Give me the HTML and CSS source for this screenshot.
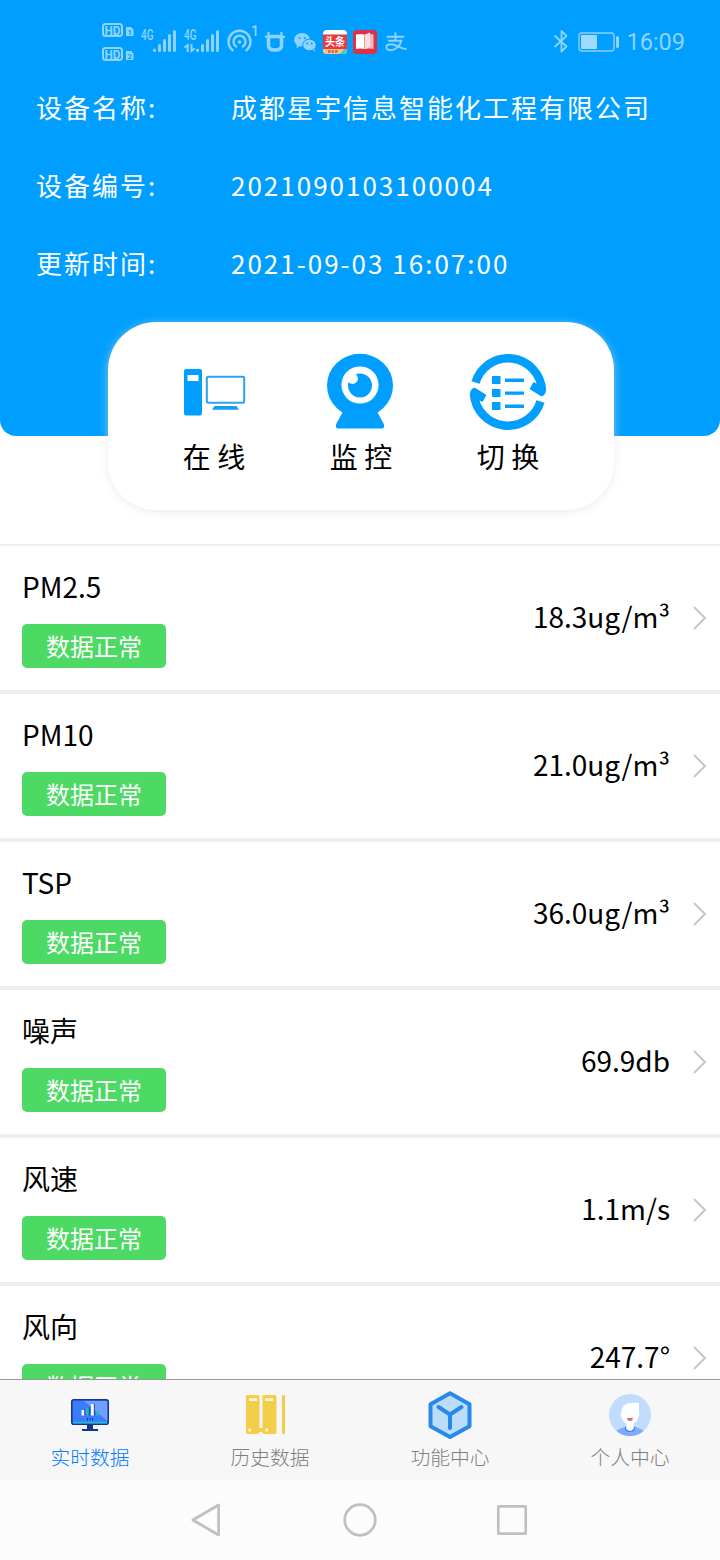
FILE: index.html
```html
<!DOCTYPE html>
<html lang="zh-CN">
<head>
<meta charset="utf-8">
<title>实时数据</title>
<link rel="stylesheet" href="styles.css">
</head>
<body>
<div class="app">
  <header class="header">
    <div class="status">
      <svg class="status-left" width="310" height="50" viewBox="100 16 310 50">
        <g fill="none" stroke="#8fd3ff" stroke-width="2">
          <rect x="103" y="24" width="19" height="12" rx="2.5"/>
          <rect x="103" y="48" width="19" height="12" rx="2.5"/>
        </g>
        <g class="roboto" fill="#8fd3ff">
          <text x="104.500" y="35" font-size="13.500" font-weight="700" textLength="16" lengthAdjust="spacingAndGlyphs">HD</text>
          <text x="104.500" y="59" font-size="13.500" font-weight="700" textLength="16" lengthAdjust="spacingAndGlyphs">HD</text>
          <path d="M126 27h5l2.500 2.500V36H126zM126 51h5l2.500 2.500V60H126z"/>
          <text x="141" y="40" font-size="14" font-weight="500" textLength="12.500" lengthAdjust="spacingAndGlyphs">4G</text>
          <text x="184" y="40" font-size="14" font-weight="500" textLength="12.500" lengthAdjust="spacingAndGlyphs">4G</text>
          <text x="251" y="36" font-size="14" font-weight="500">1</text>
        </g>
        <g class="roboto" fill="#079fff" font-size="8" font-weight="700">
          <text x="127.500" y="34.500">1</text><text x="127.500" y="58.800">2</text>
        </g>
        <g stroke="#8fd3ff" stroke-width="3" stroke-linecap="round" fill="none">
          <path d="M154.500 50v.5M159.500 45.500v5M164.500 40.500v10M169.500 35.500v15M174.500 31.500v19"/>
          <path d="M197.500 50v.5M202.500 45.500v5M207.500 40.500v10M212.500 35.500v15M217.500 31.500v19"/>
        </g>
        <path d="M184.500 47.500l3.200-2.500v7M191.500 44v7l3.200-2.500" fill="none" stroke="#8fd3ff" stroke-width="2"/>
        <g fill="none" stroke="#8fd3ff" stroke-width="2.400" stroke-linecap="round">
          <path d="M232.500 50.200a11 11 0 1 1 14 0M236 46.500a6 6 0 1 1 7 0"/>
          <circle cx="239.500" cy="42" r="1.800" fill="#8fd3ff" stroke="none"/>
        </g>
        <path d="M271 36.500h8q2.500 0 2.500 2.500v6.500q0 4.500-6.500 4.500t-6.500-4.500V39q0-2.500 2.500-2.500z" fill="none" stroke="#8fd3ff" stroke-width="3.600"/>
        <path d="M265 36.800l5-.8M285 36.800l-5-.8M268.500 32v4M281.500 32v4" stroke="#8fd3ff" stroke-width="2.200"/>
        <g fill="#8fd3ff">
          <path d="M297 44l-.5 4 3.200-1.700z"/>
          <ellipse cx="302" cy="39.700" rx="8" ry="6.800"/>
          <path d="M312 50l3 1.500-.5-4z"/>
          <ellipse cx="309.500" cy="45" rx="6.800" ry="5.800" stroke="#079fff" stroke-width="1"/>
        </g>
        <g fill="#079fff"><circle cx="299.500" cy="38" r="1.100"/><circle cx="304.800" cy="38" r="1.100"/><circle cx="307.300" cy="43.500" r="1"/><circle cx="311.800" cy="43.500" r="1"/></g>
        <rect x="323" y="30" width="24" height="24" rx="4" fill="#fff"/>
        <path d="M323 34.500h24V49h-24z" fill="#e93b3e"/>
        <path d="M323 49h24v1q0 4-4 4h-16q-4 0-4-4z" fill="#f6c58e"/>
        <path d="M340 54l4-5h3v1q0 4-4 4z" fill="#4ec9c8"/>
        <path d="M328 51.500h10" stroke="#de5c35" stroke-width="2.500" stroke-dasharray="2.500 1"/>
        <text class="cjk" x="325" y="46" font-size="11" font-weight="700" fill="#fff" textLength="20" lengthAdjust="spacingAndGlyphs">头条</text>
        <rect x="353" y="30" width="24" height="24" rx="4" fill="#df3046"/>
        <path d="M356 34.500q5-1 8.500 0v14.500q-4-1-8.500 0z" fill="#fff"/>
        <path d="M365 34.500q5-1 8.500 0v14.500q-4-1-8.500 0z" fill="#f6b9c0"/>
        <path d="M365 34.500l5-2v14l-5 2.500z" fill="#fbdde0"/>
        <g fill="none" stroke="#8fd3ff" stroke-width="1.900" stroke-linecap="round">
          <path d="M387.500 36.800h16M395.500 33v7.500M389 40.800h12.500c-1.500 5-6 9.500-10.500 9.500-6.500 0-6-6 0-6 5 0 9 4 15 4.800"/>
        </g>
      </svg>
      <div class="status-right">
        <svg width="68" height="26" viewBox="552 29 68 26">
          <path d="M554.500 35.500l12 11-5 5V31l5 5-12 11" fill="none" stroke="#8fd3ff" stroke-width="1.800" stroke-linejoin="round"/>
          <rect x="579" y="33" width="35" height="18" rx="3" fill="none" stroke="#6cc5ff" stroke-width="1.800"/>
          <rect x="581" y="35" width="16" height="14" rx="1" fill="#9fdbff"/>
          <rect x="616" y="36" width="3" height="12" rx="1.500" fill="#8fd3ff"/>
        </svg>
        <span class="clock">16:09</span>
      </div>
    </div>
    <dl class="info">
      <dt>设备名称:</dt><dd>成都星宇信息智能化工程有限公司</dd>
      <dt>设备编号:</dt><dd>2021090103100004</dd>
      <dt>更新时间:</dt><dd>2021-09-03 16:07:00</dd>
    </dl>
  </header>

  <section class="card">
    <div class="action">
      <svg width="80" height="80" viewBox="174 352 80 80">
        <path fill="#009fff" fill-rule="evenodd" d="M186 369h14q2 0 2 2v42q0 2.500-2 2.500h-14q-2 0-2-2.500v-42q0-2 2-2zM187.500 375v6h11v-6z"/>
        <rect x="206.800" y="376.800" width="37.400" height="26" rx="1.500" fill="#fff" stroke="#2ba2f2" stroke-width="2"/>
        <path d="M214.500 406h22l2.500 3.800h-27z" fill="#159df5"/>
      </svg>
      <span>在 线</span>
    </div>
    <div class="action">
      <svg width="80" height="80" viewBox="321 352 80 80">
        <ellipse cx="360" cy="385.500" rx="33" ry="31.700" fill="#009fff"/>
        <path fill="#009fff" d="M343 411.500h34l6.800 12.500q1.200 4.500-2 4.500h-43.600q-3.200 0-2-4.500z"/>
        <circle cx="360" cy="385" r="18.600" fill="#fff"/>
        <circle cx="360" cy="385.500" r="12" fill="#009fff"/>
        <circle cx="352.500" cy="378.500" r="5.400" fill="#fff"/>
      </svg>
      <span>监 控</span>
    </div>
    <div class="action">
      <svg width="80" height="80" viewBox="468 352 80 80">
        <g fill="none" stroke="#009fff" stroke-width="8.500">
          <path d="M475.500 382.500a34 34 0 0 1 66.500 8"/>
          <path d="M540.500 401.500a34 34 0 0 1-66.500-8"/>
        </g>
        <path fill="#009fff" d="M546 388q.5 7-4.500 8.500L529.500 389l4-7 6 3zM470 396q-.5-7 4.500-8.500l12 7.500-4 7-6-3z"/>
        <path fill="#009fff" d="M492 376h8.500v8H492zM492 389h8.500v8H492zM492 402h8.500v8H492zM505 378.500h19v3.500h-19zM505 391.500h19v3.300h-19zM505 404.500h19v3.500h-19z"/>
      </svg>
      <span>切 换</span>
    </div>
  </section>

  <main class="list">
    <div class="row"><div><div class="name">PM2.5</div><span class="badge">数据正常</span></div><span class="value">18.3ug/m³</span><svg class="arrow" viewBox="0 0 14 26"><path d="M1 2l11 11L1 24"/></svg></div>
    <div class="row"><div><div class="name">PM10</div><span class="badge">数据正常</span></div><span class="value">21.0ug/m³</span><svg class="arrow" viewBox="0 0 14 26"><path d="M1 2l11 11L1 24"/></svg></div>
    <div class="row"><div><div class="name">TSP</div><span class="badge">数据正常</span></div><span class="value">36.0ug/m³</span><svg class="arrow" viewBox="0 0 14 26"><path d="M1 2l11 11L1 24"/></svg></div>
    <div class="row"><div><div class="name">噪声</div><span class="badge">数据正常</span></div><span class="value">69.9db</span><svg class="arrow" viewBox="0 0 14 26"><path d="M1 2l11 11L1 24"/></svg></div>
    <div class="row"><div><div class="name">风速</div><span class="badge">数据正常</span></div><span class="value">1.1m/s</span><svg class="arrow" viewBox="0 0 14 26"><path d="M1 2l11 11L1 24"/></svg></div>
    <div class="row"><div><div class="name">风向</div><span class="badge">数据正常</span></div><span class="value">247.7°</span><svg class="arrow" viewBox="0 0 14 26"><path d="M1 2l11 11L1 24"/></svg></div>
  </main>

  <nav class="tabs">
    <a class="tab active">
      <svg width="48" height="50" viewBox="66 1390 48 50">
        <path d="M87 1424h6v6h-6z" fill="#12378f"/><path d="M82 1429h16v2H82z" fill="#12378f"/>
        <rect x="71.800" y="1399.800" width="36.400" height="24.500" rx="2" fill="#3b7cff" stroke="#12378f" stroke-width="1.600"/>
        <path d="M84 1401h22.500l.8 1v19z" fill="#709fff"/>
        <path d="M73 1421.800h34v1.700H73z" fill="#25b8d6"/>
        <path d="M81.500 1410h3v5.500h-3zM91 1404h3v11.500h-3z" fill="#fff"/>
        <path d="M86 1407.500h3v8h-3zM96 1411.500h3v4h-3z" fill="#20b4c8"/>
        <path d="M84.800 1409.500v6M89.300 1407v8.500M94.300 1403.500v12" stroke="#12378f" stroke-width=".8"/>
        <path d="M87.500 1418v2.500M90 1418v2.500M92.500 1418v2.500" stroke="#12378f" stroke-width=".9"/>
      </svg>
      <span>实时数据</span>
    </a>
    <a class="tab">
      <svg width="48" height="50" viewBox="246 1390 48 50">
        <path d="M247 1395h11q1.500 0 1.500 1.500V1428h3v-33h12.500q1.500 0 1.500 1.500V1432q0 2-1.500 2h-11q-1.500 0-2-2h-2.500q-.5 2-2 2h-10q-1.500 0-1.500-1.500V1396z" fill="#f2ce4b"/>
        <rect x="282" y="1395" width="3" height="39" rx="1" fill="#f2ce4b"/>
        <path d="M249 1398.200h8v2.800h-8zM265 1398.200h8v2.800h-8zM248.500 1428.500h2.500v3h-2.500zM265.500 1428.500h2.500v3h-2.500z" fill="#fff6d5"/>
      </svg>
      <span>历史数据</span>
    </a>
    <a class="tab">
      <svg width="48" height="50" viewBox="426 1390 48 50">
        <path d="M450 1393.200l19.500 11v22L450 1437l-19.500-10.800v-22z" fill="#bbdcfb" stroke="#2a89e8" stroke-width="4" stroke-linejoin="round"/>
        <path d="M438.500 1407l11.500 7.500 11.500-7.500M450 1414.500v13.500" fill="none" stroke="#2a89e8" stroke-width="4" stroke-linecap="round" stroke-linejoin="round"/>
      </svg>
      <span>功能中心</span>
    </a>
    <a class="tab">
      <svg width="48" height="50" viewBox="606 1390 48 50">
        <circle cx="630" cy="1415" r="21" fill="#c1dcfc"/>
        <path d="M616.500 1431q5-4.500 13.500-4.500t13.500 4.500q-5.500 5-13.500 5t-13.500-5z" fill="#7eabff"/>
        <path d="M625.500 1426.500q0 5 4.500 5t4.500-5" fill="#fff" stroke="#3f77ed" stroke-width="1.200"/>
        <path d="M626.500 1422h7v6.500q-3.500 2.500-7 0z" fill="#fff"/>
        <path d="M621.500 1413q0-10 9-10h8.500v10.500q1 .5.500 2l-1 1.200q-1.500 7.500-8.500 7.500t-8.500-7.500l-1-1.200q-.5-1.500 1-2.500z" fill="#fff"/>
        <path d="M627 1418h6q-.3 3-3 3t-3-3z" fill="#df6d69"/>
      </svg>
      <span>个人中心</span>
    </a>
  </nav>

  <div class="sysnav">
    <svg width="340" height="40" viewBox="190 1500 340 40" fill="none" stroke="#c0c0c0" stroke-width="2.700" stroke-linejoin="round">
      <path d="M192.800 1520l25.800-15v30z"/>
      <circle cx="360" cy="1520" r="15.300"/>
      <rect x="498.300" y="1506.300" width="27.400" height="27.400" rx=".5"/>
    </svg>
  </div>
</div>
</body>
</html>
```

FILE: styles.css
```css
* { box-sizing: border-box; }
body {
  margin: 0;
  background: #fff;
  color: #000;
  font-family: "Noto Sans CJK SC", sans-serif;
}
svg { display: block; flex: none; }
.roboto { font-family: Roboto, sans-serif; }
.cjk { font-family: "Noto Sans CJK SC", sans-serif; }
.app {
  display: flex;
  flex-direction: column;
  width: 720px;
  height: 1560px;
  overflow: hidden;
}
.header {
  flex: none;
  height: 436px;
  background: #009fff;
  border-radius: 0 0 16px 16px;
}
.status {
  display: flex;
  justify-content: space-between;
  padding: 16px 35px 0 100px;
  height: 68px;
}
.status-right {
  display: flex;
  align-items: center;
  gap: 6px;
  height: 52px;
}
.clock {
  font: 23.5px/54px Roboto, sans-serif;
  color: #8fd3ff;
}
.info {
  display: grid;
  grid-template-columns: 195px 1fr;
  grid-auto-rows: 78px;
  margin: 0;
  padding-left: 36px;
  color: #fff;
  font-size: 26px;
  line-height: 78px;
  letter-spacing: 2px;
  white-space: nowrap;
}
.info dd { margin: 0; }
.card {
  flex: none;
  display: flex;
  justify-content: center;
  width: 506px;
  height: 188px;
  margin: -114px 0 34px 108px;
  padding-top: 30px;
  background: #fff;
  border-radius: 48px;
  box-shadow: 0 2px 10px rgba(225, 225, 225, .6);
}
.action {
  display: flex;
  flex-direction: column;
  align-items: center;
  width: 147px;
  font-size: 28px;
  line-height: 48px;
}
.list {
  flex: 1;
  min-height: 0;
  overflow: hidden;
  border-top: 2px solid #eee;
}
.row {
  display: flex;
  align-items: center;
  height: 148px;
  padding: 0 13px 0 22px;
  border-bottom: 4px solid #eee;
  font-size: 28px;
}
.name { line-height: 36px; margin-bottom: 20px; padding-bottom: 0; }
.badge {
  display: block;
  width: 144px;
  height: 44px;
  border-radius: 5px;
  background: #4cd964;
  color: #fff;
  font-size: 24px;
  line-height: 43px;
  text-align: center;
}
.value { margin: 0 23px 0 auto; padding-bottom: 4px; }
.arrow {
  width: 14px;
  height: 26px;
  fill: none;
  stroke: #c7c7cc;
  stroke-width: 2;
}
.tabs {
  flex: none;
  display: grid;
  grid-template-columns: repeat(4, 1fr);
  height: 101px;
  border-top: 1px solid #969698;
  background: #f7f7f8;
}
.tab {
  display: flex;
  flex-direction: column;
  align-items: center;
  padding-top: 10px;
  color: #7d7e80;
  font-size: 19.8px;
  font-weight: 300;
  line-height: 34px;
}
.tab.active { color: #007aff; }
.sysnav {
  flex: none;
  display: flex;
  justify-content: center;
  align-items: center;
  height: 80px;
  background: #fcfcfc;
}
```
